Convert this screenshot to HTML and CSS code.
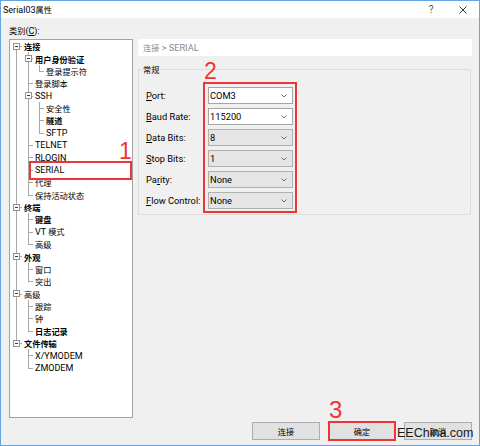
FILE: index.html
```html
<!DOCTYPE html>
<html>
<head>
<meta charset="utf-8">
<title>Serial03属性</title>
<link rel="stylesheet" href="styles.css">
</head>
<body>
<div class="window">
  <div class="titlebar">
    <div class="title">Serial03<span class="cn">属性</span></div>
    <div class="tb-btn help">?</div>
    <div class="tb-btn close"><svg width="8" height="8" viewBox="0 0 8 8"><path d="M0.5 0.5L7.5 7.5M7.5 0.5L0.5 7.5" stroke="#333" stroke-width="1" fill="none"/></svg></div>
  </div>

  <div class="main">
    <div class="cat-label"><span class="cn">类别</span>(<u>C</u>):</div>

    <div class="tree">
      <div class="row"><span class="c first"><span class="exp"></span></span><span class="t b cn">连接</span></div>
      <div class="row"><span class="c pipe"></span><span class="c tee"><span class="exp"></span></span><span class="t b cn">用户身份验证</span></div>
      <div class="row"><span class="c pipe"></span><span class="c pipe"></span><span class="c elbow"></span><span class="t cn">登录提示符</span></div>
      <div class="row"><span class="c pipe"></span><span class="c tee"></span><span class="t cn">登录脚本</span></div>
      <div class="row"><span class="c pipe"></span><span class="c tee"><span class="exp"></span></span><span class="t">SSH</span></div>
      <div class="row"><span class="c pipe"></span><span class="c pipe"></span><span class="c tee"></span><span class="t cn">安全性</span></div>
      <div class="row"><span class="c pipe"></span><span class="c pipe"></span><span class="c tee"></span><span class="t b cn">隧道</span></div>
      <div class="row"><span class="c pipe"></span><span class="c pipe"></span><span class="c elbow"></span><span class="t">SFTP</span></div>
      <div class="row"><span class="c pipe"></span><span class="c tee"></span><span class="t">TELNET</span></div>
      <div class="row"><span class="c pipe"></span><span class="c tee"></span><span class="t">RLOGIN</span></div>
      <div class="row"><span class="c pipe"></span><span class="c tee"></span><span class="t">SERIAL</span></div>
      <div class="row"><span class="c pipe"></span><span class="c tee"></span><span class="t cn">代理</span></div>
      <div class="row"><span class="c pipe"></span><span class="c elbow"></span><span class="t cn">保持活动状态</span></div>
      <div class="row"><span class="c tee"><span class="exp"></span></span><span class="t b cn">终端</span></div>
      <div class="row"><span class="c pipe"></span><span class="c tee"></span><span class="t b cn">键盘</span></div>
      <div class="row"><span class="c pipe"></span><span class="c tee"></span><span class="t">VT <span class="cn">模式</span></span></div>
      <div class="row"><span class="c pipe"></span><span class="c elbow"></span><span class="t cn">高级</span></div>
      <div class="row"><span class="c tee"><span class="exp"></span></span><span class="t b cn">外观</span></div>
      <div class="row"><span class="c pipe"></span><span class="c tee"></span><span class="t cn">窗口</span></div>
      <div class="row"><span class="c pipe"></span><span class="c elbow"></span><span class="t cn">突出</span></div>
      <div class="row"><span class="c tee"><span class="exp"></span></span><span class="t cn">高级</span></div>
      <div class="row"><span class="c pipe"></span><span class="c tee"></span><span class="t cn">跟踪</span></div>
      <div class="row"><span class="c pipe"></span><span class="c tee"></span><span class="t cn">钟</span></div>
      <div class="row"><span class="c pipe"></span><span class="c elbow"></span><span class="t b cn">日志记录</span></div>
      <div class="row"><span class="c elbow"><span class="exp"></span></span><span class="t b cn">文件传输</span></div>
      <div class="row"><span class="c"></span><span class="c tee"></span><span class="t">X/YMODEM</span></div>
      <div class="row"><span class="c"></span><span class="c elbow"></span><span class="t">ZMODEM</span></div>
      <span class="mark r1"></span><span class="num n1">1</span>
    </div>

    <div class="right">
      <div class="crumb"><span class="cn">连接</span> &gt; SERIAL</div>
      <fieldset class="group">
        <legend><span class="cn">常规</span></legend>
        <div class="form">
          <label class="lbl"><u>P</u>ort:</label>
          <div class="sel on"><span>COM3</span><svg class="chev" width="6" height="4" viewBox="0 0 6 4"><path d="M0.5 0.5L3 3L5.5 0.5" stroke="#707070" fill="none"/></svg></div>
          <label class="lbl"><u>B</u>aud Rate:</label>
          <div class="sel on"><span>115200</span><svg class="chev" width="6" height="4" viewBox="0 0 6 4"><path d="M0.5 0.5L3 3L5.5 0.5" stroke="#707070" fill="none"/></svg></div>
          <label class="lbl"><u>D</u>ata Bits:</label>
          <div class="sel"><span>8</span><svg class="chev" width="6" height="4" viewBox="0 0 6 4"><path d="M0.5 0.5L3 3L5.5 0.5" stroke="#707070" fill="none"/></svg></div>
          <label class="lbl"><u>S</u>top Bits:</label>
          <div class="sel"><span>1</span><svg class="chev" width="6" height="4" viewBox="0 0 6 4"><path d="M0.5 0.5L3 3L5.5 0.5" stroke="#707070" fill="none"/></svg></div>
          <label class="lbl">Pa<u>r</u>ity:</label>
          <div class="sel"><span>None</span><svg class="chev" width="6" height="4" viewBox="0 0 6 4"><path d="M0.5 0.5L3 3L5.5 0.5" stroke="#707070" fill="none"/></svg></div>
          <label class="lbl"><u>F</u>low Control:</label>
          <div class="sel"><span>None</span><svg class="chev" width="6" height="4" viewBox="0 0 6 4"><path d="M0.5 0.5L3 3L5.5 0.5" stroke="#707070" fill="none"/></svg></div>
          <span class="mark r2"></span><span class="num n2">2</span>
        </div>
      </fieldset>
    </div>
  </div>

  <div class="footer">
    <div class="btn"><span class="cn">连接</span></div>
    <div class="btn default"><span class="cn">确定</span><span class="mark r3"></span><span class="num n3">3</span></div>
    <div class="btn"><span class="cn">取消</span></div>
    <span class="watermark">EEChina.com</span>
  </div>
</div>
</body>
</html>
```

FILE: styles.css
```css
* { box-sizing: border-box; }
html, body { margin: 0; padding: 0; }
body {
  width: 480px;
  height: 446px;
  overflow: hidden;
  font-family: Roboto, "Noto Sans CJK SC", sans-serif;
  font-size: 9px;
  color: #000;
  background: #f0f0f0;
}
.cn { font-family: "Noto Sans CJK SC", sans-serif; font-size: 8.2px; }
u { text-decoration: underline; text-underline-offset: 1px; }

.window {
  width: 480px;
  height: 446px;
  border: 1px solid #62a6e4;
  background: #f0f0f0;
  display: flex;
  flex-direction: column;
}

/* title bar */
.titlebar {
  flex: none;
  height: 17px;
  background: #fff;
  display: flex;
  align-items: center;
  padding-left: 2px;
}
.title { flex: 1; line-height: 12px; }
.tb-btn {
  width: 32px;
  height: 17px;
  display: flex;
  align-items: center;
  justify-content: center;
}
.help { font-size: 10px; color: #555; }

/* main area */
.main {
  flex: none;
  height: 400px;
  padding: 0 7px 0 8px;
  display: grid;
  grid-template-columns: 124px 334px;
  grid-template-rows: 21px 379px;
  column-gap: 5px;
}
.cat-label {
  grid-column: 1 / -1;
  padding-top: 6px;
  line-height: 12px;
}

/* tree */
.tree {
  position: relative;
  background: #fff;
  border: 1px solid #a3a3a3;
  --ln: #a8a8a8;
}
.row {
  height: 12.385px;
  display: flex;
  align-items: stretch;
  white-space: nowrap;
}
.c {
  flex: none;
  width: 11px;
  display: flex;
  align-items: center;
  background-repeat: no-repeat;
}
.c:first-child { width: 12px; }
.pipe {
  background-image: linear-gradient(var(--ln), var(--ln));
  background-size: 1px 100%;
  background-position: 6px 0;
}
.tee {
  background-image: linear-gradient(var(--ln), var(--ln)), linear-gradient(var(--ln), var(--ln));
  background-size: 1px 100%, 6px 1px;
  background-position: 6px 0, 6px 6px;
}
.elbow {
  background-image: linear-gradient(var(--ln), var(--ln)), linear-gradient(var(--ln), var(--ln));
  background-size: 1px 7px, 6px 1px;
  background-position: 6px 0, 6px 6px;
}
.first {
  background-image: linear-gradient(var(--ln), var(--ln)), linear-gradient(var(--ln), var(--ln));
  background-size: 1px 7px, 6px 1px;
  background-position: 6px 6px, 6px 6px;
}
.exp {
  width: 7px;
  height: 7px;
  margin-left: 3px;
  border: 1px solid #939393;
  background: #fff linear-gradient(#3c3c3c, #3c3c3c) center / 3px 1px no-repeat;
}
.t {
  margin-left: 2px;
  align-self: center;
  line-height: 12px;
}
.b { font-weight: 700; }

/* right column */
.right {
  display: flex;
  flex-direction: column;
}
.crumb {
  height: 17px;
  line-height: 17px;
  background: #fff;
  padding-left: 5px;
  color: #8a8a8a;
  font-size: 9.2px;
}
.group {
  margin: 7px 0 0 0;
  padding: 0;
  width: 333px;
  min-width: 0;
  border: 1px solid #dcdcdc;
}
.group legend {
  margin-left: 3px;
  padding: 0 1px;
  line-height: 12px;
}
.form {
  position: relative;
  padding: 11px 0 5px 7px;
  display: grid;
  grid-template-columns: 62px 85px;
  grid-auto-rows: 17px;
  row-gap: 4px;
  font-size: 9.3px;
}
.lbl {
  align-self: center;
  white-space: nowrap;
  line-height: 12px;
}
.sel {
  display: flex;
  align-items: center;
  justify-content: space-between;
  padding: 0 5px 0 1px;
  background: #e5e5e5;
  border: 1px solid #b0b0b0;
}
.sel.on { background: #fff; border-color: #a6a6a6; }
.chev { flex: none; }

/* footer */
.footer {
  position: relative;
  flex: none;
  display: flex;
  justify-content: flex-end;
  gap: 8px;
  padding: 4px 7px 0 0;
}
.btn {
  position: relative;
  width: 68px;
  height: 18px;
  background: #e1e1e1;
  border: 1px solid #adadad;
  display: flex;
  align-items: center;
  justify-content: center;
}
.btn.default { border-color: #2a7fd4; }

/* annotations */
.mark {
  position: absolute;
  border: 2px solid #ec3535;
}
.num {
  position: absolute;
  font-family: "Liberation Sans", Arial, sans-serif;
  color: #ec3535;
  line-height: 1;
}
.r1 { left: 19px; top: 121px; width: 103px; height: 19px; }
.n1 { left: 109px; top: 100px; font-size: 23px; }
.r2 { left: 64px; top: 6px; width: 94px; height: 131px; }
.n2 { left: 65px; top: -16px; font-size: 23px; }
.r3 { left: -1px; top: -2px; width: 68px; height: 20px; }
.n3 { left: 0; top: -25px; font-size: 24px; }
.watermark {
  position: absolute;
  left: 396px;
  top: 9px;
  font-family: "Liberation Sans", Arial, sans-serif;
  font-size: 12.5px;
  line-height: 1;
  color: #1a1a1a;
}
```
